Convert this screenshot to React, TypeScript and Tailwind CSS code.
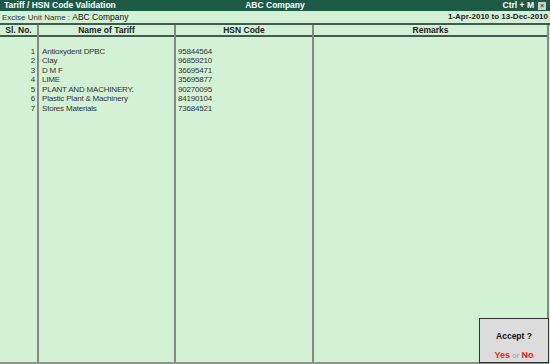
import React from "react";

const rows = [
  { no: 1, name: "Antioxydent DPBC", hsn: "95844564" },
  { no: 2, name: "Clay", hsn: "96859210" },
  { no: 3, name: "D M F", hsn: "36695471" },
  { no: 4, name: "LIME", hsn: "35695877" },
  { no: 5, name: "PLANT AND MACHINERY.", hsn: "90270095" },
  { no: 6, name: "Plastic Plant & Machinery", hsn: "84190104" },
  { no: 7, name: "Stores Materials", hsn: "73684521" },
];

const colLine = "border-r-2 border-[#7f8c80]";
const headCell = "h-[12px] border-b-2 border-[#3f5a4e] flex items-center justify-center font-bold text-[8.5px] text-[#222]";
const cell = "h-[9.5px] flex items-center text-[8px] tracking-[-0.2px]";

export default function App() {
  return (
    <div className="relative w-[550px] h-[364px] bg-[#d3f1d4] flex flex-col text-[8.5px] leading-none text-[#333] overflow-hidden" style={{ fontFamily: '"Liberation Sans", Arial, sans-serif' }}>
      {/* title bar */}
      <div className="h-[11px] bg-[#1d5a45] text-white font-bold grid grid-cols-3 items-center px-[4px]">
        <div>Tariff / HSN Code Validation</div>
        <div className="text-center">ABC Company</div>
        <div className="flex justify-end items-center gap-[4px]">
          <span>Ctrl + M</span>
          <span className="w-[8px] h-[8px] bg-[#c8d4cc] text-[#1d5a45] text-[7px] flex items-center justify-center">×</span>
        </div>
      </div>

      {/* unit line */}
      <div className="h-[14px] border-b-2 border-[#3f5a4e] flex items-center justify-between px-[2px]">
        <div className="text-[8px]">
          Excise Unit Name : <span className="text-[#111] text-[8.5px]">ABC Company</span>
        </div>
        <div className="font-bold text-[8px] text-[#222]">1-Apr-2010 to 13-Dec-2010</div>
      </div>

      {/* table */}
      <div className="flex-1 flex border-b-2 border-[#8a968b] mr-[1px]">
        <div className={`w-[39px] ${colLine} flex flex-col`}>
          <div className={headCell}>Sl. No.</div>
          <div className="pt-[10px] flex flex-col">
            {rows.map((r) => (
              <div key={r.no} className={`${cell} justify-end pr-[2px]`}>{r.no}</div>
            ))}
          </div>
        </div>
        <div className={`w-[137px] ${colLine} flex flex-col`}>
          <div className={headCell}>Name of Tariff</div>
          <div className="pt-[10px] flex flex-col">
            {rows.map((r) => (
              <div key={r.no} className={`${cell} pl-[3px]`}>{r.name}</div>
            ))}
          </div>
        </div>
        <div className={`w-[138px] ${colLine} flex flex-col`}>
          <div className={headCell}>HSN Code</div>
          <div className="pt-[10px] flex flex-col">
            {rows.map((r) => (
              <div key={r.no} className={`${cell} pl-[2px]`}>{r.hsn}</div>
            ))}
          </div>
        </div>
        <div className={`flex-1 ${colLine} flex flex-col`}>
          <div className={headCell}>Remarks</div>
        </div>
      </div>

      {/* accept popup */}
      <div className="absolute right-[1px] bottom-[1px] w-[70px] h-[45px] bg-[#dcdcdc] border border-[#333] flex flex-col items-center">
        <div className="mt-[13px] font-bold text-[#111]">Accept ?</div>
        <div className="mt-auto mb-[2px] font-bold text-[9px]">
          <span className="text-[#ff2020]">Yes</span>
          <span className="text-[#9a9a9a] font-normal text-[8px]"> or </span>
          <span className="text-[#ff2020]">No</span>
        </div>
      </div>
    </div>
  );
}
